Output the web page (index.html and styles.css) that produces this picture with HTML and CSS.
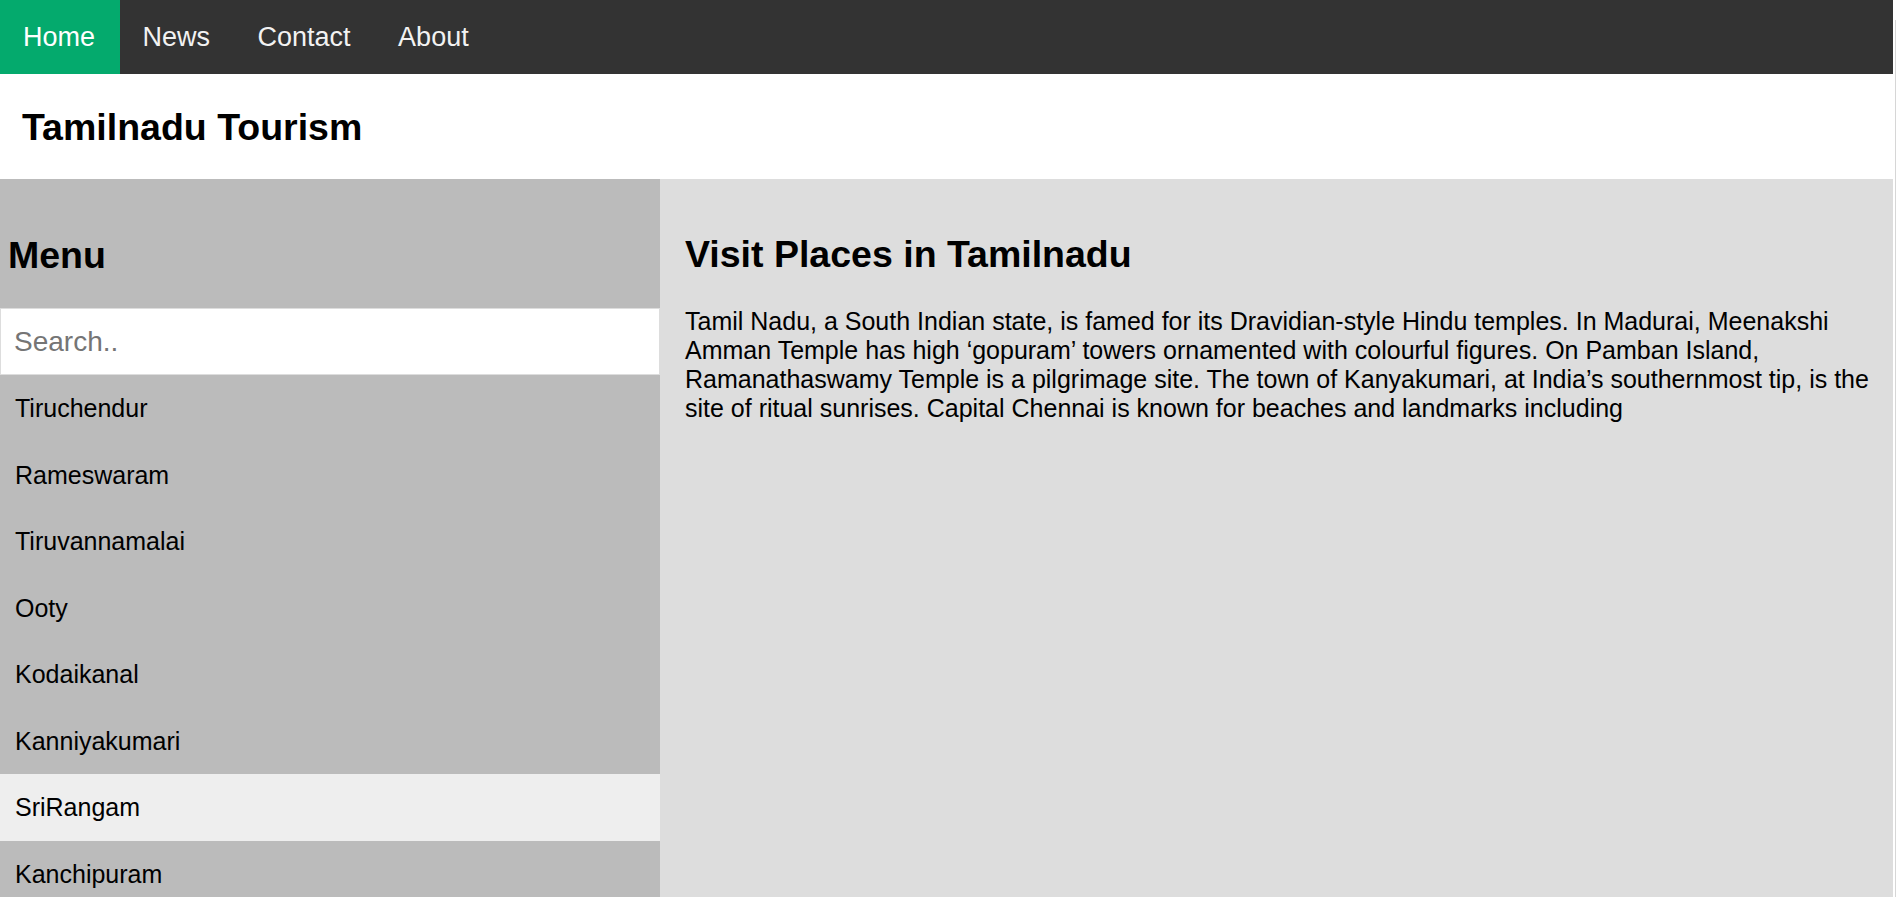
FILE: index.html
```html
<!DOCTYPE html>
<html lang="en">
<head>
<meta charset="utf-8">
<title>Tamilnadu Tourism</title>
<link rel="stylesheet" href="styles.css">
</head>
<body>
<div class="page">
  <nav class="topnav">
    <a class="topnav-link active" href="#">Home</a>
    <a class="topnav-link" href="#">News</a>
    <a class="topnav-link" href="#">Contact</a>
    <a class="topnav-link" href="#">About</a>
  </nav>
  <header class="header">
    <h1 class="site-title">Tamilnadu Tourism</h1>
  </header>
  <div class="row">
    <aside class="sidebar">
      <h2 class="side-title">Menu</h2>
      <input class="search" type="text" placeholder="Search..">
      <ul class="menu">
        <li class="menu-item">Tiruchendur</li>
        <li class="menu-item">Rameswaram</li>
        <li class="menu-item">Tiruvannamalai</li>
        <li class="menu-item">Ooty</li>
        <li class="menu-item">Kodaikanal</li>
        <li class="menu-item">Kanniyakumari</li>
        <li class="menu-item hover">SriRangam</li>
        <li class="menu-item">Kanchipuram</li>
      </ul>
    </aside>
    <main class="main">
      <h2 class="main-title">Visit Places in Tamilnadu</h2>
      <p class="intro">Tamil Nadu, a South Indian state, is famed for its Dravidian-style Hindu temples. In Madurai, Meenakshi Amman Temple has high ‘gopuram’ towers ornamented with colourful figures. On Pamban Island, Ramanathaswamy Temple is a pilgrimage site. The town of Kanyakumari, at India’s southernmost tip, is the site of ritual sunrises. Capital Chennai is known for beaches and landmarks including</p>
    </main>
  </div>
</div>
<div class="scrolltrack"><div class="scrollline"></div></div>
</body>
</html>
```

FILE: styles.css
```css
html, body {
  margin: 0;
  padding: 0;
  height: 100%;
  overflow: hidden;
  background: #ffffff;
}

body {
  display: flex;
  font-family: "Liberation Sans", Arial, sans-serif;
  color: #000;
}

.page {
  flex: 1;
  min-width: 0;
  display: flex;
  flex-direction: column;
}

.scrolltrack {
  width: 4px;
  flex: none;
  padding-top: 20px;
  box-sizing: border-box;
  background: #ffffff;
  display: flex;
}

.scrollline {
  width: 1px;
  margin-left: 2px;
  background: #d6d6d6;
  flex: none;
}

.topnav {
  display: flex;
  background: #333333;
  height: 74px;
  flex: none;
}

.topnav-link {
  display: block;
  padding: 0 24.5px 0 23px;
  line-height: 74px;
  font-size: 27px;
  color: #f2f2f2;
  text-decoration: none;
}

.topnav-link.active {
  background: #04aa6d;
  color: #ffffff;
}

.header {
  background: #ffffff;
  padding: 31.5px 22px;
  flex: none;
}

.site-title {
  margin: 0;
  font-size: 37.5px;
  line-height: 42px;
  font-weight: bold;
}

.row {
  display: flex;
  flex: 1;
}

.sidebar {
  width: 660px;
  flex: none;
  background: #bbbbbb;
}

.side-title {
  margin: 0;
  padding: 55px 8px 32px;
  font-size: 37.5px;
  line-height: 42px;
  font-weight: bold;
}

.search {
  display: block;
  width: 100%;
  box-sizing: border-box;
  margin: 0;
  border: 1px solid #dddddd;
  padding: 17px 13px;
  font-family: "Liberation Sans", Arial, sans-serif;
  font-size: 28px;
  line-height: 31px;
  height: 67px;
  background: #ffffff;
  color: #000;
  outline: none;
}

.search::placeholder {
  color: #757575;
}

.menu {
  list-style: none;
  margin: 0;
  padding: 0;
}

.menu-item {
  padding: 19px 15px;
  font-size: 25px;
  line-height: 28.5px;
  color: #000;
}

.menu-item.hover {
  background: #eeeeee;
}

.main {
  flex: 1;
  background: #dddddd;
  padding: 0 10px 0 25px;
}

.main-title {
  margin: 54px 0 32px;
  font-size: 37.5px;
  line-height: 42px;
  font-weight: bold;
}

.intro {
  margin: 0;
  font-size: 25px;
  line-height: 29px;
}
```
